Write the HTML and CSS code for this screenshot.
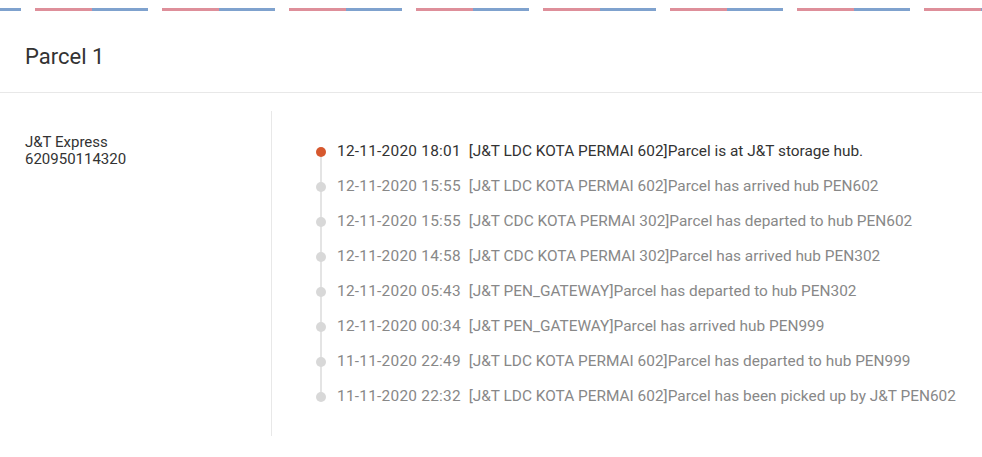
FILE: index.html
```html
<!DOCTYPE html>
<html>
<head>
    <title>Parcel 1</title>
    <link rel="stylesheet" href="styles.css">
</head>
<body>
    <div class="envelope"></div>
    <div class="parcel-header">Parcel 1</div>
    <div class="parcel-body">
        <div class="carrier">
            <div>J&amp;T Express</div>
            <div>620950114320</div>
        </div>
        <ul class="timeline">
            <li class="current"><span class="time">12-11-2020 18:01</span>[J&amp;T LDC KOTA PERMAI 602]Parcel is at J&amp;T storage hub.</li>
            <li><span class="time">12-11-2020 15:55</span>[J&amp;T LDC KOTA PERMAI 602]Parcel has arrived hub PEN602</li>
            <li><span class="time">12-11-2020 15:55</span>[J&amp;T CDC KOTA PERMAI 302]Parcel has departed to hub PEN602</li>
            <li><span class="time">12-11-2020 14:58</span>[J&amp;T CDC KOTA PERMAI 302]Parcel has arrived hub PEN302</li>
            <li><span class="time">12-11-2020 05:43</span>[J&amp;T PEN_GATEWAY]Parcel has departed to hub PEN302</li>
            <li><span class="time">12-11-2020 00:34</span>[J&amp;T PEN_GATEWAY]Parcel has arrived hub PEN999</li>
            <li><span class="time">11-11-2020 22:49</span>[J&amp;T LDC KOTA PERMAI 602]Parcel has departed to hub PEN999</li>
            <li><span class="time">11-11-2020 22:32</span>[J&amp;T LDC KOTA PERMAI 602]Parcel has been picked up by J&amp;T PEN602</li>
        </ul>
    </div>
</body>
</html>
```

FILE: styles.css
```css
body {
    margin: 0;
    font-family: Roboto, "Liberation Sans", sans-serif;
    font-size: 15px;
    color: #333;
    background: #fff;
}
.envelope {
    margin-top: 8px;
    height: 3px;
    background-image: linear-gradient(to right, #de8f9a 0, #de8f9a 57px, #7fa2ce 57px, #7fa2ce 113px, transparent 113px, transparent 127px);
    background-size: 127px 3px;
    background-position: -92px 0;
}
.parcel-header {
    padding: 34px 25px 23px;
    font-size: 22px;
    line-height: 24px;
    color: #333;
    border-bottom: 1px solid #e8e8e8;
}
.parcel-body {
    display: flex;
    padding-top: 18px;
}
.carrier {
    width: 246px;
    height: 302px;
    padding: 23px 0 0 25px;
    line-height: 17px;
    border-right: 1px solid #e8e8e8;
}
.timeline {
    list-style: none;
    margin: 0 0 0 44px;
    padding: 23px 0 0;
    font-size: 15.4px;
}
.timeline li {
    position: relative;
    height: 35px;
    line-height: 35px;
    padding-left: 21px;
    color: #888;
}
.timeline li.current {
    color: #333;
}
.timeline li::before {
    content: "";
    position: absolute;
    left: 0;
    top: 13px;
    width: 10px;
    height: 10px;
    border-radius: 50%;
    background: #d8d8d8;
}
.timeline li.current::before {
    background: #d6582e;
}
.timeline li::after {
    content: "";
    position: absolute;
    left: 4px;
    top: 18px;
    width: 2px;
    height: 35px;
    background: #e4e4e4;
    z-index: -1;
}
.timeline li:last-child::after {
    display: none;
}
.time {
    margin-right: 8px;
    letter-spacing: 0.25px;
}
```
